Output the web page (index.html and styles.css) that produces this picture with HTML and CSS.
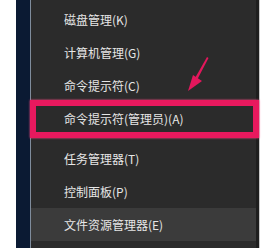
FILE: index.html
```html
<!DOCTYPE html>
<html lang="zh-CN">
<head>
    <meta charset="UTF-8">
    <title>Win+X 菜单</title>
    <link rel="stylesheet" href="styles.css">
</head>
<body>
    <div class="screen">
        <div class="taskbar"></div>
        <div class="menu">
            <div class="item">磁盘管理(K)</div>
            <div class="item">计算机管理(G)</div>
            <div class="item">命令提示符(C)</div>
            <div class="item">命令提示符(管理员)(A)</div>
            <div class="separator"></div>
            <div class="item">任务管理器(T)</div>
            <div class="item">控制面板(P)</div>
            <div class="item hover">文件资源管理器(E)</div>
        </div>
        <div class="edge"></div>

        <!-- annotation drawn over the screenshot -->
        <div class="mark"></div>
        <svg class="arrow" width="30" height="40" viewBox="0 0 30 40">
            <path d="M22 1 L23.5 2 L12 24 L9.5 23 Z" fill="#e3175c"/>
            <path d="M8 19 L17 25 L3 35 Z" fill="#e3175c"/>
        </svg>
    </div>
</body>
</html>
```

FILE: styles.css
```css
body, html {
    margin: 0;
    padding: 0;
    background: #fff;
    overflow: hidden;
}
.screen {
    position: relative;
    display: flex;
    width: 268px;
    height: 248px;
    background: #fff;
    padding-left: 16px;
    box-sizing: border-box;
}
.taskbar {
    width: 14px;
    background: #0b1a33;
    border-right: 1px solid #7f8c9c;
}
.menu {
    width: 225px;
    background: #2b2b2b;
    border-right: 3px solid #1e1e1e;
    padding-top: 3px;
    font-family: "Noto Sans CJK SC", "Noto Sans", sans-serif;
    font-size: 12px;
    color: #e6e6e6;
}
.item {
    height: 33px;
    line-height: 33px;
    padding-left: 33px;
}
.item.hover {
    background: #3b3b3b;
}
.separator {
    height: 7px;
}
.edge {
    width: 1px;
    background: #c8c8c8;
}
.mark {
    position: absolute;
    left: 30px;
    top: 100px;
    width: 217px;
    height: 26px;
    border: 6px solid #e8195e;
    box-shadow: 0 0 2px #ff4d85;
}
.arrow {
    position: absolute;
    left: 185px;
    top: 56px;
}
```
